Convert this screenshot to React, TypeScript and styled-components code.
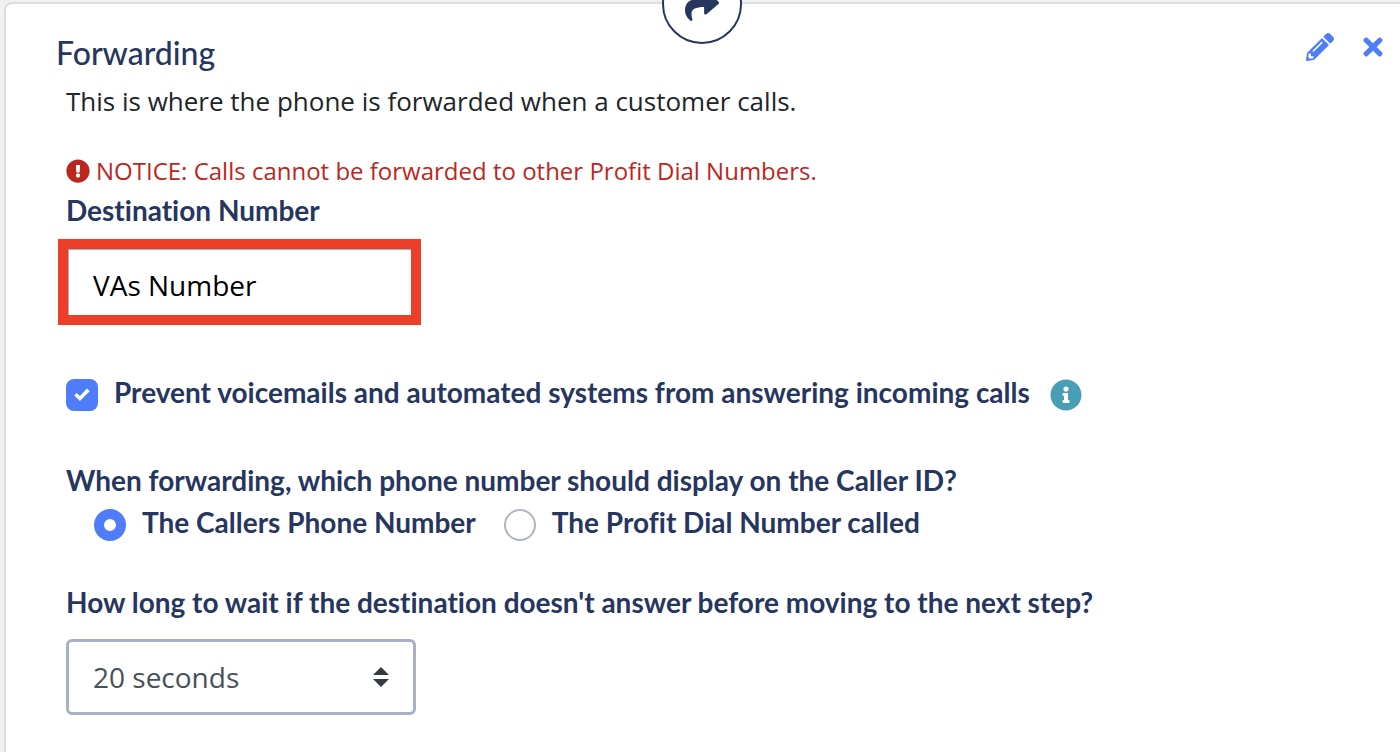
import React from "react";
import styled, { createGlobalStyle } from "styled-components";
import {
  FaExclamationCircle,
  FaInfoCircle,
  FaPencilAlt,
  FaShare,
  FaTimes,
} from "react-icons/fa";

const navy = "#27365f";
const blue = "#4f7df9";
const slate = "#a9b0c5";

const GlobalStyle = createGlobalStyle`
  *, *::before, *::after { box-sizing: border-box; }
  body {
    margin: 0;
    background: #f1f1f1;
    color: #212529;
    font-family: "Open Sans", "Noto Sans", sans-serif;
    font-variant-ligatures: none;
    overflow-x: hidden;
  }
`;

const Page = styled.div`
  padding: 2px 0 0 4px;
`;

const Card = styled.section`
  position: relative;
  min-height: calc(100vh - 2px);
  padding: 29px 13px 36px 50px;
  background: #fff;
  border: 2px solid #dedede;
  border-width: 2px 0 0 2px;
  border-radius: 8px 0 0 0;
`;

const StepBadge = styled.div`
  position: absolute;
  top: -40px;
  left: 50%;
  width: 80px;
  height: 80px;
  margin-left: -41px;
  padding-top: 4px;
  display: flex;
  align-items: center;
  justify-content: center;
  background: #fff;
  border: 2px solid ${navy};
  border-radius: 50%;
  color: ${navy};
  font-size: 34px;
`;

const Header = styled.header`
  display: flex;
  justify-content: space-between;
  align-items: flex-start;
`;

const Title = styled.h2`
  margin: 0;
  color: ${navy};
  font: 500 32px/40px Lato, sans-serif;
  font-variant-ligatures: none;
`;

const Actions = styled.div`
  display: flex;
  gap: 25px;
`;

const IconButton = styled.button`
  display: flex;
  align-items: center;
  justify-content: center;
  height: 28px;
  padding: 0;
  border: 0;
  background: none;
  color: ${blue};
  font-size: 28px;
  cursor: pointer;
`;

const Content = styled.form`
  display: flex;
  flex-direction: column;
  align-items: flex-start;
  padding-left: 10px;
`;

const Description = styled.p`
  margin: 8px 0 0;
  font-size: 26px;
  line-height: 40px;
`;

const Notice = styled.p`
  display: flex;
  align-items: center;
  gap: 6px;
  margin: 32px 0 1px;
  color: #bb271e;
  font-size: 24px;
  line-height: 36px;
`;

const Label = styled.label`
  color: ${navy};
  font: 700 28px/40px Lato, sans-serif;
  font-variant-ligatures: none;
`;

const NumberInput = styled.input`
  width: 363px;
  height: 86px;
  margin: 9px 0 0 -8px;
  padding: 6px 25px 0;
  border: 10px solid #eb4027;
  border-radius: 0;
  outline: none;
  box-shadow: inset 1px 1px 0 ${slate};
  background: #fff;
  color: #000;
  font: 400 28px/40px "Open Sans", "Noto Sans", sans-serif;
`;

const CheckRow = styled.div`
  display: flex;
  align-items: flex-start;
  gap: 16px;
  margin-top: 47px;
`;

const Checkbox = styled.input`
  appearance: none;
  display: grid;
  place-content: center;
  width: 32px;
  height: 32px;
  margin: 7px 0 0;
  border: 2px solid ${slate};
  border-radius: 8px;
  background: #fff;
  &:checked {
    border-color: ${blue};
    background: ${blue};
  }
  &:checked::before {
    content: "";
    width: 16px;
    height: 16px;
    background: #fff;
    clip-path: polygon(81% 10%, 98% 26%, 37% 88%, 2% 53%, 17% 37%, 37% 57%);
  }
`;

const InfoButton = styled.button`
  display: flex;
  margin: 7px 0 0 4px;
  padding: 0;
  border: 0;
  background: none;
  color: #489fb5;
  font-size: 32px;
  cursor: pointer;
`;

const RadioGroup = styled.fieldset`
  min-width: 0;
  margin: 48px 0 0;
  padding: 0;
  border: 0;
`;

const Legend = styled.legend`
  padding: 0;
  color: ${navy};
  font: 700 28px/40px Lato, sans-serif;
  font-variant-ligatures: none;
`;

const RadioRow = styled.div`
  display: flex;
  gap: 28px;
  margin: 2px 0 0 28px;
`;

const RadioOption = styled.div`
  display: flex;
  align-items: flex-start;
  gap: 16px;
`;

const Radio = styled.input`
  appearance: none;
  width: 32px;
  height: 32px;
  margin: 7px 0 0;
  border: 2px solid #adb5bd;
  border-radius: 50%;
  background: #fff;
  &:checked {
    border: 10px solid ${blue};
  }
`;

const WaitField = styled.div`
  display: flex;
  flex-direction: column;
  align-items: flex-start;
  gap: 17px;
  margin-top: 40px;
`;

const SelectBox = styled.div`
  display: grid;
  grid-template-columns: 350px;
  align-items: center;
  > * {
    grid-area: 1 / 1;
  }
`;

const Select = styled.select`
  appearance: none;
  height: 76px;
  padding: 0 64px 0 24px;
  border: 3px solid ${slate};
  border-radius: 6px;
  background: #fff;
  color: #495057;
  font: 400 28px/40px "Open Sans", "Noto Sans", sans-serif;
`;

const SelectArrows = styled.svg`
  justify-self: end;
  margin-right: 27px;
  pointer-events: none;
`;

export default function App() {
  return (
    <Page>
      <GlobalStyle />
      <Card>
        <StepBadge>
          <FaShare />
        </StepBadge>
        <Header>
          <Title>Forwarding</Title>
          <Actions>
            <IconButton type="button" aria-label="Edit step">
              <FaPencilAlt />
            </IconButton>
            <IconButton type="button" aria-label="Remove step">
              <FaTimes />
            </IconButton>
          </Actions>
        </Header>
        <Content>
          <Description>
            This is where the phone is forwarded when a customer calls.
          </Description>
          <Notice>
            <FaExclamationCircle />
            NOTICE: Calls cannot be forwarded to other Profit Dial Numbers.
          </Notice>
          <Label htmlFor="destination">Destination Number</Label>
          <NumberInput id="destination" type="text" defaultValue="VAs Number" />
          <CheckRow>
            <Checkbox id="prevent" type="checkbox" defaultChecked />
            <Label htmlFor="prevent">
              Prevent voicemails and automated systems from answering incoming calls
            </Label>
            <InfoButton type="button" aria-label="More information">
              <FaInfoCircle />
            </InfoButton>
          </CheckRow>
          <RadioGroup>
            <Legend>
              When forwarding, which phone number should display on the Caller ID?
            </Legend>
            <RadioRow>
              <RadioOption>
                <Radio id="caller" type="radio" name="callerId" defaultChecked />
                <Label htmlFor="caller">The Callers Phone Number</Label>
              </RadioOption>
              <RadioOption>
                <Radio id="called" type="radio" name="callerId" />
                <Label htmlFor="called">The Profit Dial Number called</Label>
              </RadioOption>
            </RadioRow>
          </RadioGroup>
          <WaitField>
            <Label htmlFor="wait">
              How long to wait if the destination doesn't answer before moving to the next step?
            </Label>
            <SelectBox>
              <Select id="wait" defaultValue="20">
                <option value="10">10 seconds</option>
                <option value="20">20 seconds</option>
                <option value="30">30 seconds</option>
              </Select>
              <SelectArrows width="16" height="20" viewBox="0 0 16 20" aria-hidden="true">
                <path d="M8 0 16 8H0zM0 12h16l-8 8z" fill="#343a40" />
              </SelectArrows>
            </SelectBox>
          </WaitField>
        </Content>
      </Card>
    </Page>
  );
}
